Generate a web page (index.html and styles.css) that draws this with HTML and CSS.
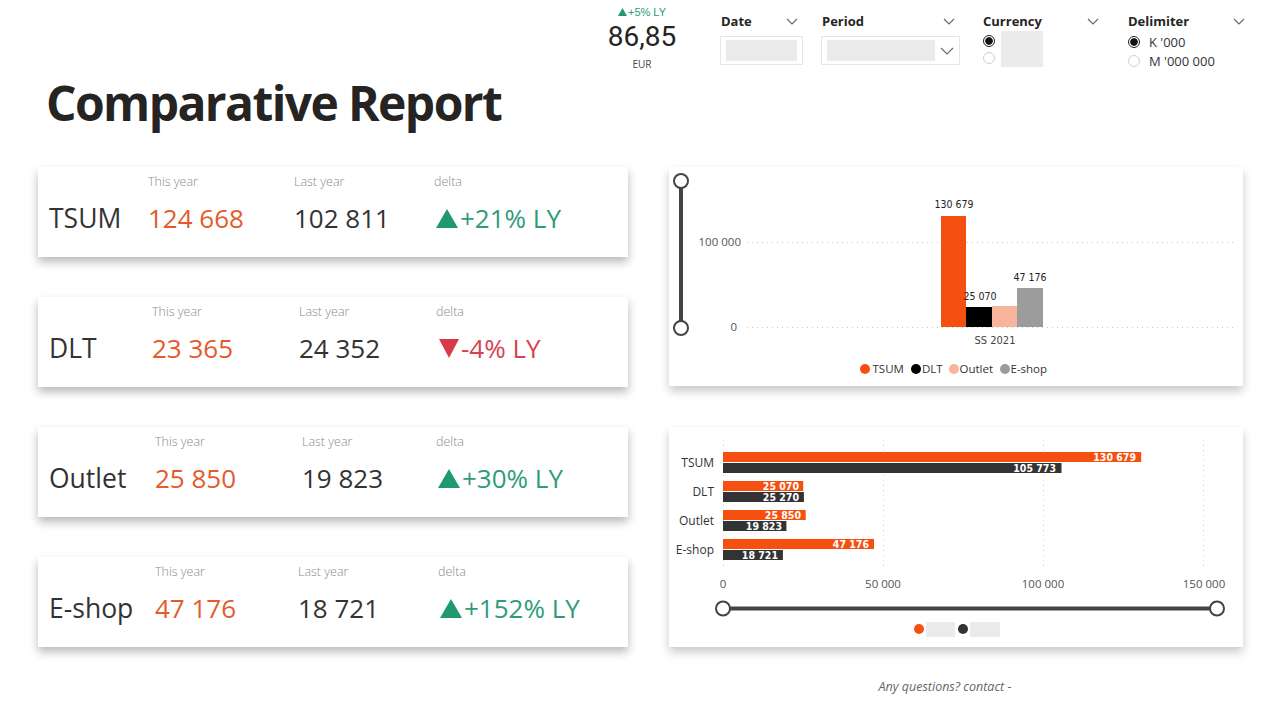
FILE: index.html
```html
<!DOCTYPE html>
<html lang="en">
<head>
<meta charset="utf-8">
<title>Comparative Report</title>
<link rel="stylesheet" href="styles.css">
</head>
<body>
<div class="page">
  <header class="topbar">
    <div class="kpi">
      <div class="kpi-delta"><svg class="kpi-tri" width="9" height="8" viewBox="0 0 9 8"><polygon points="4.5,0 9,8 0,8" fill="#1f9a6f"/></svg>+5% LY</div>
      <div class="kpi-value">86,85</div>
      <div class="kpi-unit">EUR</div>
    </div>

    <div class="slicer slicer-date">
      <div class="slicer-head"><span>Date</span><svg class="chev" width="12" height="7" viewBox="0 0 12 7"><polyline points="1,1 6,6 11,1" fill="none" stroke="#666" stroke-width="1.1"/></svg></div>
      <div class="slicer-box"><div class="slicer-fill fill-date"></div></div>
    </div>

    <div class="slicer slicer-period">
      <div class="slicer-head"><span>Period</span><svg class="chev" width="12" height="7" viewBox="0 0 12 7"><polyline points="1,1 6,6 11,1" fill="none" stroke="#666" stroke-width="1.1"/></svg></div>
      <div class="slicer-box box-period"><div class="slicer-fill fill-period"></div><svg class="chev chev-box" width="14" height="8" viewBox="0 0 14 8"><polyline points="1,1 7,7 13,1" fill="none" stroke="#666" stroke-width="1.1"/></svg></div>
    </div>

    <div class="slicer slicer-currency">
      <div class="slicer-head"><span>Currency</span><svg class="chev" width="12" height="7" viewBox="0 0 12 7"><polyline points="1,1 6,6 11,1" fill="none" stroke="#666" stroke-width="1.1"/></svg></div>
      <div class="currency-body">
        <div class="radio-list">
          <div class="radio-row"><span class="radio radio-on"></span></div>
          <div class="radio-row"><span class="radio"></span></div>
        </div>
        <div class="currency-fill"></div>
      </div>
    </div>

    <div class="slicer slicer-delim">
      <div class="slicer-head"><span>Delimiter</span><svg class="chev" width="12" height="7" viewBox="0 0 12 7"><polyline points="1,1 6,6 11,1" fill="none" stroke="#666" stroke-width="1.1"/></svg></div>
      <div class="radio-list delim-list">
        <div class="radio-row"><span class="radio radio-on"></span><span class="radio-label">K '000</span></div>
        <div class="radio-row"><span class="radio"></span><span class="radio-label">M '000 000</span></div>
      </div>
    </div>
  </header>

  <h1 class="title">Comparative Report</h1>

  <main class="content">
    <section class="cards">
      <div class="card card-tsum">
        <div class="lbl c2">This year</div><div class="lbl c3">Last year</div><div class="lbl c4">delta</div>
        <div class="name">TSUM</div>
        <div class="val ty">124 668</div>
        <div class="val ly">102 811</div>
        <div class="val delta up"><svg class="tri" width="22" height="19" viewBox="0 0 22 19"><polygon points="11,0 22,19 0,19" fill="#1f9a6f"/></svg>+21% LY</div>
      </div>
      <div class="card card-dlt">
        <div class="lbl c2">This year</div><div class="lbl c3">Last year</div><div class="lbl c4">delta</div>
        <div class="name">DLT</div>
        <div class="val ty">23 365</div>
        <div class="val ly">24 352</div>
        <div class="val delta down"><svg class="tri" width="20" height="19" viewBox="0 0 20 19"><polygon points="0,0 20,0 10,19" fill="#d93a48"/></svg>-4% LY</div>
      </div>
      <div class="card card-outlet">
        <div class="lbl c2">This year</div><div class="lbl c3">Last year</div><div class="lbl c4">delta</div>
        <div class="name">Outlet</div>
        <div class="val ty">25 850</div>
        <div class="val ly">19 823</div>
        <div class="val delta up"><svg class="tri" width="22" height="19" viewBox="0 0 22 19"><polygon points="11,0 22,19 0,19" fill="#1f9a6f"/></svg>+30% LY</div>
      </div>
      <div class="card card-eshop">
        <div class="lbl c2">This year</div><div class="lbl c3">Last year</div><div class="lbl c4">delta</div>
        <div class="name">E-shop</div>
        <div class="val ty">47 176</div>
        <div class="val ly">18 721</div>
        <div class="val delta up"><svg class="tri" width="22" height="19" viewBox="0 0 22 19"><polygon points="11,0 22,19 0,19" fill="#1f9a6f"/></svg>+152% LY</div>
      </div>
    </section>

    <section class="charts">
      <div class="chart chart-col">
        <svg class="chart-svg" width="574" height="219" viewBox="0 0 574 219">
          <line x1="12" y1="14" x2="12" y2="161" stroke="#444" stroke-width="4"/>
          <circle cx="12" cy="14" r="7" fill="#fff" stroke="#444" stroke-width="2"/>
          <circle cx="12" cy="161" r="7" fill="#fff" stroke="#444" stroke-width="2"/>
          <line class="grid" x1="78" y1="75.5" x2="568" y2="75.5"/>
          <line class="grid" x1="78" y1="160.5" x2="568" y2="160.5"/>
          <text class="axis" x="72" y="79" text-anchor="end">100 000</text>
          <text class="axis" x="68" y="164" text-anchor="end">0</text>
          <rect x="272" y="49" width="25" height="111" fill="#f5500f"/>
          <rect x="297" y="140" width="26" height="20" fill="#000"/>
          <rect x="323" y="139" width="25" height="21" fill="#f9b49c"/>
          <rect x="348" y="121" width="26" height="39" fill="#9c9c9c"/>
          <text class="dl" x="285" y="41" text-anchor="middle">130 679</text>
          <text class="dl" x="311" y="133" text-anchor="middle">25 070</text>
          <text class="dl" x="361" y="114" text-anchor="middle">47 176</text>
          <text class="cat" x="326" y="177" text-anchor="middle">SS 2021</text>
          <circle cx="196" cy="202" r="5" fill="#f5500f"/>
          <text class="leg" x="203.5" y="206">TSUM</text>
          <circle cx="247" cy="202" r="5" fill="#000"/>
          <text class="leg" x="253" y="206">DLT</text>
          <circle cx="285" cy="202" r="5" fill="#f9b49c"/>
          <text class="leg" x="290.5" y="206">Outlet</text>
          <circle cx="336" cy="202" r="5" fill="#9c9c9c"/>
          <text class="leg" x="341.5" y="206">E-shop</text>
        </svg>
      </div>

      <div class="chart chart-bar">
        <svg class="chart-svg" width="574" height="220" viewBox="0 0 574 220">
          <line class="vgrid" x1="54.5" y1="13" x2="54.5" y2="143"/>
          <line class="vgrid" x1="214.5" y1="13" x2="214.5" y2="143"/>
          <line class="vgrid" x1="374.5" y1="13" x2="374.5" y2="143"/>
          <line class="vgrid" x1="534.5" y1="13" x2="534.5" y2="143"/>
          <text class="catb" x="45" y="40" text-anchor="end">TSUM</text>
          <text class="catb" x="45" y="69" text-anchor="end">DLT</text>
          <text class="catb" x="45" y="98" text-anchor="end">Outlet</text>
          <text class="catb" x="45" y="127" text-anchor="end">E-shop</text>

          <rect x="54" y="25" width="418.2" height="10" fill="#f5500f"/>
          <rect x="54" y="36" width="338.5" height="10" fill="#333"/>
          <rect x="54" y="54" width="80.2" height="10" fill="#f5500f"/>
          <rect x="54" y="65" width="80.9" height="10" fill="#333"/>
          <rect x="54" y="83" width="82.7" height="10" fill="#f5500f"/>
          <rect x="54" y="94" width="63.4" height="10" fill="#333"/>
          <rect x="54" y="112" width="151" height="10" fill="#f5500f"/>
          <rect x="54" y="123" width="59.9" height="10" fill="#333"/>

          <text class="bl" x="467" y="34" text-anchor="end">130 679</text>
          <text class="bl" x="387" y="45" text-anchor="end">105 773</text>
          <text class="bl" x="130" y="63" text-anchor="end">25 070</text>
          <text class="bl" x="130" y="74" text-anchor="end">25 270</text>
          <text class="bl" x="132" y="92" text-anchor="end">25 850</text>
          <text class="bl" x="113" y="103" text-anchor="end">19 823</text>
          <text class="bl" x="200" y="121" text-anchor="end">47 176</text>
          <text class="bl" x="109" y="132" text-anchor="end">18 721</text>

          <text class="axis" x="54" y="161" text-anchor="middle">0</text>
          <text class="axis" x="214" y="161" text-anchor="middle">50 000</text>
          <text class="axis" x="374" y="161" text-anchor="middle">100 000</text>
          <text class="axis" x="535" y="161" text-anchor="middle">150 000</text>

          <line x1="54" y1="181.5" x2="548" y2="181.5" stroke="#444" stroke-width="4"/>
          <circle cx="54" cy="181.5" r="7" fill="#fff" stroke="#444" stroke-width="2"/>
          <circle cx="548" cy="181.5" r="7" fill="#fff" stroke="#444" stroke-width="2"/>

          <circle cx="250" cy="202" r="5" fill="#f5500f"/>
          <rect x="257" y="195" width="29" height="15" fill="#ebebeb"/>
          <circle cx="294" cy="202" r="5" fill="#333"/>
          <rect x="301" y="195" width="30" height="15" fill="#ebebeb"/>
        </svg>
      </div>

      <footer class="footer">Any questions? contact -</footer>
    </section>
  </main>
</div>
</body>
</html>
```

FILE: styles.css
```css
* { box-sizing: border-box; }

body {
  margin: 0;
  background: #ffffff;
  font-family: "Open Sans", "Noto Sans", sans-serif;
  color: #252423;
}

.page {
  width: 1280px;
  height: 718px;
  overflow: hidden;
}

/* ---------- top bar ---------- */
.topbar {
  display: flex;
  height: 75px;
  padding-left: 600px;
}

.kpi {
  width: 84px;
  display: flex;
  flex-direction: column;
  align-items: center;
}

.kpi-delta {
  margin-top: 5px;
  height: 14px;
  font-family: "Liberation Sans", "Open Sans", sans-serif;
  font-size: 11px;
  line-height: 14px;
  color: #2e9c78;
  display: flex;
  align-items: center;
  gap: 1px;
}

.kpi-tri { display: block; }

.kpi-value {
  margin-top: 4px;
  height: 28px;
  font-family: Roboto, "Open Sans", sans-serif;
  font-size: 28px;
  line-height: 28px;
  color: #252423;
}

.kpi-unit {
  margin-top: 7px;
  font-size: 10px;
  line-height: 12px;
  color: #444;
}

.slicer {
  display: flex;
  flex-direction: column;
}

.slicer-head {
  margin-top: 12px;
  height: 18px;
  display: flex;
  align-items: center;
  justify-content: space-between;
  padding: 0 5px 0 1px;
  font-size: 13px;
  font-weight: 700;
  color: #252423;
}

.chev { display: block; }

.slicer-date { margin-left: 36px; width: 83px; }
.slicer-period { margin-left: 18px; width: 139px; }
.slicer-currency { margin-left: 22px; width: 122px; }
.slicer-delim { margin-left: 23px; width: 123px; }

.slicer-box {
  margin-top: 6px;
  height: 29px;
  border: 1px solid #e6e6e6;
  display: flex;
  align-items: center;
  padding: 0 5px;
}

.slicer-fill {
  height: 21px;
  background: #ebebeb;
}

.fill-date { width: 74px; }
.fill-period { width: 108px; }
.chev-box { margin-left: 5px; }

.currency-body {
  margin-top: 1px;
  height: 36px;
  display: flex;
}

.currency-fill {
  margin-left: 6px;
  width: 42px;
  height: 36px;
  background: #ebebeb;
}

.radio-list {
  display: flex;
  flex-direction: column;
  padding-top: 1.5px;
  padding-left: 1px;
}

.delim-list { margin-top: 1px; }

.radio-row {
  height: 19px;
  display: flex;
  align-items: center;
}

.radio {
  width: 12px;
  height: 12px;
  border-radius: 50%;
  border: 1px solid #cfcfcf;
  background: #fff;
  flex: none;
}

.radio-on {
  border: 1.5px solid #222;
  background: radial-gradient(circle, #111 0 3.4px, #fff 4.2px);
}

.radio-label {
  margin-left: 9px;
  font-size: 13px;
  color: #333;
}

/* ---------- title ---------- */
.title {
  margin: 0 0 0 46px;
  font-size: 48px;
  line-height: 56px;
  font-weight: 700;
  letter-spacing: -1.6px;
  color: #252423;
}

/* ---------- content ---------- */
.content {
  display: flex;
  margin-top: 36px;
}

.cards {
  margin-left: 38px;
  width: 590px;
  display: flex;
  flex-direction: column;
  gap: 40px;
}

.card {
  height: 90px;
  background: #fff;
  box-shadow: 0 5px 9px rgba(0, 0, 0, 0.28);
  display: grid;
  grid-template-rows: 16px 34px;
  row-gap: 11px;
  padding: 7px 0 0 11px;
}

.card-tsum { grid-template-columns: 99px 146px 140px 1fr; }
.card-dlt { grid-template-columns: 103px 147px 137px 1fr; }
.card-outlet { grid-template-columns: 106px 147px 134px 1fr; }
.card-eshop { grid-template-columns: 106px 143px 140px 1fr; }

.lbl {
  grid-row: 1;
  font-size: 12.5px;
  line-height: 16px;
  font-weight: 300;
  color: #8a8a8a;
}

.c2 { grid-column: 2; }
.c3 { grid-column: 3; }
.c4 { grid-column: 4; }

.name {
  grid-row: 2;
  grid-column: 1;
  font-size: 26.5px;
  line-height: 34px;
  color: #333;
}

.val {
  grid-row: 2;
  font-size: 26px;
  line-height: 34px;
  white-space: nowrap;
}

.ty { grid-column: 2; color: #e45a2b; }
.ly { grid-column: 3; color: #333; }

.delta { grid-column: 4; padding-left: 2px; }
.delta.up { color: #2f9c79; }
.delta.down { color: #d6434f; padding-left: 3px; }

.tri {
  vertical-align: baseline;
  margin-right: 2px;
}

/* ---------- charts ---------- */
.charts {
  margin-left: 41px;
  width: 574px;
  display: flex;
  flex-direction: column;
}

.chart {
  background: #fff;
  box-shadow: 0 5px 9px rgba(0, 0, 0, 0.22);
}

.chart-bar { margin-top: 41px; }

.chart-svg { display: block; }

.grid {
  stroke: #c8c8c8;
  stroke-width: 1;
  stroke-dasharray: 1 4;
}

.vgrid {
  stroke: #cfcfcf;
  stroke-width: 1;
  stroke-dasharray: 1 4;
}

.axis {
  font-family: "Open Sans", sans-serif;
  font-size: 11.5px;
  fill: #555;
}

.dl {
  font-family: "DejaVu Sans Condensed", "DejaVu Sans", sans-serif;
  font-stretch: condensed;
  font-size: 10.5px;
  fill: #222;
}

.cat {
  font-family: "DejaVu Sans Condensed", "DejaVu Sans", sans-serif;
  font-stretch: condensed;
  font-size: 11px;
  fill: #444;
}

.leg {
  font-family: "Open Sans", sans-serif;
  font-size: 11.5px;
  fill: #333;
}

.catb {
  font-family: "Open Sans", sans-serif;
  font-size: 12px;
  fill: #333;
}

.bl {
  font-family: "DejaVu Sans Condensed", "DejaVu Sans", sans-serif;
  font-stretch: condensed;
  font-weight: 700;
  font-size: 10.5px;
  fill: #fff;
}

.footer {
  margin-top: 32px;
  padding-right: 22px;
  text-align: center;
  font-size: 12.5px;
  line-height: 16px;
  font-style: italic;
  color: #666;
}
```
